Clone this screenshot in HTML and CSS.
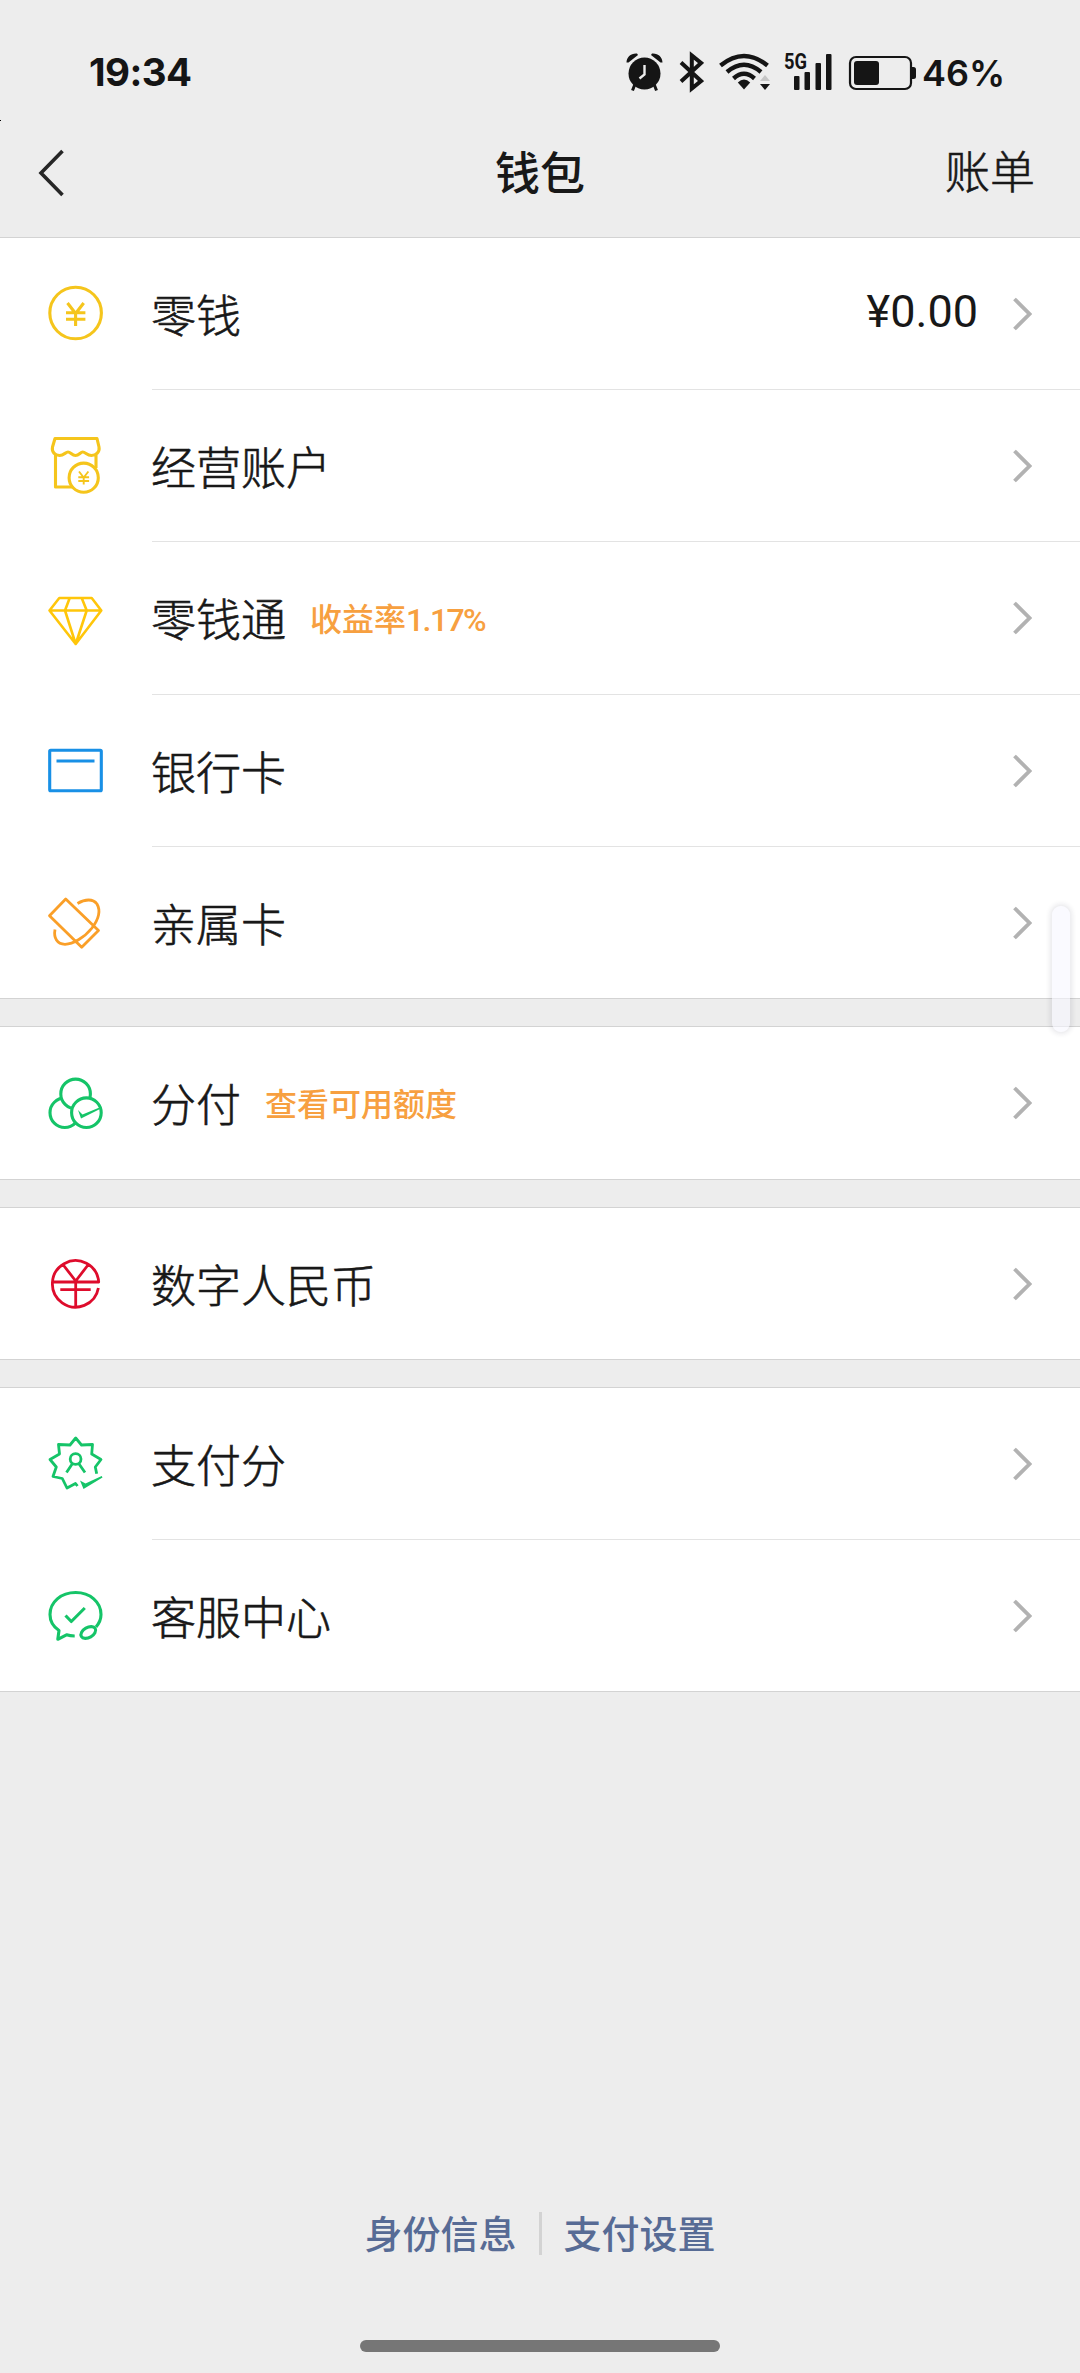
FILE: index.html
```html
<!DOCTYPE html>
<html lang="zh-CN">
<head>
<meta charset="utf-8">
<title>钱包</title>
<link rel="stylesheet" href="styles.css">
</head>
<body>
<svg class="defs" width="0" height="0"><defs>
  <symbol id="chevron" viewBox="0 0 20 34"><path d="M2.5 2L17.5 17L2.5 32" fill="none" stroke="#b2b2b2" stroke-width="3.8"/></symbol>
</defs></svg>
<header class="top">
  <div class="status">
    <span class="clock">19:34</span>
    <div class="indicators">
      <svg class="alarm" width="38" height="44" viewBox="626 50 38 44" fill="#151515">
        <circle cx="644.5" cy="73.5" r="16"/>
        <path d="M626.5 62.5C626.5 57 631 53 637 53.5L638 55L628.5 62.5ZM662.500 62.500C662.500 57 658 53 652 53.500L651 55L660.500 62.500Z"/>
        <path d="M635 84L632.500 90.500M654 84L656.500 90.500" stroke="#151515" stroke-width="3"/>
        <path d="M644.500 65V74.500L639.500 78.500" fill="none" stroke="#ededed" stroke-width="2.400"/>
      </svg>
      <svg class="bt" width="25" height="44" viewBox="679 50 25 44"><path d="M681 62.500L701 81L691.800 88.500V55.500L701 63L681 81.500" fill="none" stroke="#151515" stroke-width="4"/></svg>
      <svg class="wifi" width="54" height="44" viewBox="718 50 54 44" fill="none" stroke="#151515" stroke-width="4.400">
        <path d="M720.500 65.500Q744 46.500 767.500 65.500M727 72Q744 57.500 761 72M733.500 78.500Q744 69 754.500 78.500"/>
        <path d="M744 89.500L737.800 82.500Q744 76.500 750.200 82.500Z" fill="#151515" stroke="none"/>
        <path d="M760 81L765 75L770 81Z" fill="#c6c6c6" stroke="none"/>
        <path d="M760 84L765 90L770 84Z" fill="#151515" stroke="none"/>
      </svg>
      <svg class="signal" width="50" height="44" viewBox="783 50 50 44" fill="#151515">
        <text x="784" y="69" class="net" textLength="23" lengthAdjust="spacingAndGlyphs">5G</text>
        <rect x="794" y="76" width="5.500" height="14" rx="1"/><rect x="804.500" y="72" width="5.500" height="18" rx="1"/><rect x="815.500" y="63" width="5.500" height="27" rx="1"/><rect x="826" y="54" width="5.500" height="36" rx="1"/>
      </svg>
      <svg class="battery" width="68" height="44" viewBox="848 50 68 44">
        <rect x="850" y="57" width="61" height="32" rx="6" fill="none" stroke="#151515" stroke-width="2.200"/>
        <rect x="854" y="61" width="25" height="24" rx="3" fill="#151515"/>
        <path d="M912 67H913.500Q916 67 916 69.500V76.500Q916 79 913.500 79H912Z" fill="#151515"/>
      </svg>
      <span class="level">46%</span>
    </div>
  </div>
  <nav class="bar">
    <svg class="back" width="28" height="50" viewBox="0 0 28 50"><path d="M24.500 3L3 25L24.500 47" fill="none" stroke="#262626" stroke-width="3.600"/></svg>
    <h1 class="title">钱包</h1>
    <span class="bill">账单</span>
  </nav>
</header>
<main>
  <section class="group">
    <div class="row">
      <svg class="icon yellow" viewBox="0 0 61 61"><circle cx="30.600" cy="30" r="25.800"/><path d="M22.500 20L30.600 30.500L38.700 20M21 29.700H40.400M21 36.300H40.400M30.600 30V43"/></svg>
      <div class="cell"><span class="label">零钱</span><span class="amount">¥0.00</span><svg class="chev"><use href="#chevron"/></svg></div>
    </div>
    <div class="row">
      <svg class="icon yellow" viewBox="0 0 61 61"><path d="M10 3.500H52L54 12C55 17 51 20.500 46.500 20.500C42 20.500 40.500 17 37.700 17C35.500 17 34 20.500 30.500 20.500C27 20.500 25.500 17 23 17C20.500 17 19 20.500 14.500 20.500C10 20.500 6.500 17 7.500 12ZM10.500 20V52H27M51 20V33"/><circle cx="38.700" cy="42.700" r="14.600" fill="#fff"/><path class="fine" d="M34 36.500L38.700 42.500L43.400 36.500M33.300 42.200H44.100M33.300 46H44.100M38.700 42V49.500"/></svg>
      <div class="cell"><span class="label">经营账户</span><svg class="chev"><use href="#chevron"/></svg></div>
    </div>
    <div class="row tall">
      <svg class="icon gold" viewBox="0 0 61 61"><path d="M14.300 11H46.700L56.300 23.500L30.700 57L4.500 23.500ZM4.500 23.500H56.300M24.700 11L20 23.500L30.700 57L41.700 23.500L36.700 11"/></svg>
      <div class="cell"><span class="label">零钱通</span><span class="note">收益率<span class="rate">1.17%</span></span><svg class="chev"><use href="#chevron"/></svg></div>
    </div>
    <div class="row">
      <svg class="icon blue" viewBox="0 0 61 61"><rect x="4.700" y="10.300" width="51.600" height="40.400" rx="1"/><path d="M11.500 21H49.500"/></svg>
      <div class="cell"><span class="label">银行卡</span><svg class="chev"><use href="#chevron"/></svg></div>
    </div>
    <div class="row">
      <svg class="icon orange" viewBox="0 0 61 61"><path d="M20.700 7L4.500 23.700L36.700 55.300L53.500 38.500ZM32.500 11.500C40 7 48 6.500 52 12C56 19 53 28 47 36C39 46 28 52 20 52.300C12 52.300 8.500 46 10 37.500"/></svg>
      <div class="cell"><span class="label">亲属卡</span><svg class="chev"><use href="#chevron"/></svg></div>
    </div>
  </section>
  <section class="group">
    <div class="row tall">
      <svg class="icon green" viewBox="0 0 61 61"><circle cx="19.800" cy="40.700" r="14.800"/><circle cx="30.600" cy="21.900" r="14.800" fill="#fff"/><circle cx="41.400" cy="40.700" r="14.800" fill="#fff"/><path d="M33 38L36 46.500L55 37L54.500 35.500L37.500 42.500Z" class="solid"/></svg>
      <div class="cell"><span class="label">分付</span><span class="note">查看可用额度</span><svg class="chev"><use href="#chevron"/></svg></div>
    </div>
  </section>
  <section class="group">
    <div class="row">
      <svg class="icon red" viewBox="0 0 61 61"><path d="M53.400 35A23.200 23.200 0 1 1 53.700 29H7.500M18.300 12L30.700 28L43 12M15.300 36.700H45.700M30.700 28V53"/></svg>
      <div class="cell"><span class="label">数字人民币</span><svg class="chev"><use href="#chevron"/></svg></div>
    </div>
  </section>
  <section class="group">
    <div class="row">
      <svg class="icon green badge" viewBox="0 0 61 61"><path d="M51.700 40.700L50.300 34L56 26.500L46.700 21L47.500 11.500L36.500 12L30.700 5L25 12L13.500 11.500L14.500 21L5 26.500L11.300 34L8 43.500L17.300 45.500L22 55L30.500 50.500L32.500 53"/><circle cx="30.600" cy="26" r="5.400"/><path d="M27.500 30.500L21.500 39.500M33.700 30.500L40 39.500"/><path d="M35 47.500L38.500 56L57.500 44.500L56.700 43L40.500 50.500Z" class="solid"/></svg>
      <div class="cell"><span class="label">支付分</span><svg class="chev"><use href="#chevron"/></svg></div>
    </div>
    <div class="row">
      <svg class="icon green" viewBox="0 0 61 61"><path d="M51 42C54.500 38 56 34 56 29.500C56 17 45 7.500 30.700 7.500C16 7.500 5 17 5 29.500C5 36 8 41.500 14 45.500L12.800 54.300L21.500 49.800Q25 51 29.700 51"/><ellipse cx="43.300" cy="47.500" rx="8" ry="5" transform="rotate(-30 43.300 47.500)"/><path d="M20.500 30.500L26.300 36.500L39.800 23"/></svg>
      <div class="cell"><span class="label">客服中心</span><svg class="chev"><use href="#chevron"/></svg></div>
    </div>
  </section>
</main>
<footer class="foot">
  <div class="links"><span>身份信息</span><i class="sep"></i><span>支付设置</span></div>
  <div class="home"></div>
</footer>
<div class="handle"></div>
</body>
</html>
```
FILE: styles.css
```css
* { box-sizing: border-box; }
body {
  margin: 0;
  width: 1080px;
  height: 2373px;
  display: flex;
  flex-direction: column;
  position: relative;
  overflow: hidden;
  background: #ededed;
  color: #181818;
  font-family: Roboto, "Noto Sans CJK SC", sans-serif;
}
body::before { content: ""; position: absolute; left: 0; top: 120px; width: 1px; height: 1px; background: #000; }
svg { display: block; flex: none; }
.defs { position: absolute; }
.top { height: 237px; display: flex; flex-direction: column; }
.status { height: 110px; padding: 50px 78px 0 89px; display: flex; justify-content: space-between; }
.clock, .level { font-family: Inter, sans-serif; font-weight: 600; line-height: 44px; color: #151515; white-space: nowrap; }
.clock { font-size: 38.5px; font-weight: 700; letter-spacing: -0.6px; }
.indicators { display: flex; }
.bt { margin-left: 15px; }
.wifi { margin-left: 14px; }
.signal { margin-left: 11px; }
.battery { margin-left: 15px; }
.level { font-size: 36px; margin-left: 6px; width: 80px; line-height: 46px; }
.net { font: 700 22px Roboto, sans-serif; }
.bar { height: 127px; padding: 0 45px; display: grid; grid-template-columns: 1fr auto 1fr; align-items: center; }
.back { margin: 0 0 2px -7px; }
.title { margin: 0; padding-top: 3px; font-size: 45px; font-weight: 500; line-height: 64px; }
.bill, .label { font-size: 45px; font-weight: 300; line-height: 64px; -webkit-text-stroke: 0.6px currentColor; }
.bill { justify-self: end; }
.group { background: #fff; border-top: 1px solid #d3d3d3; border-bottom: 1px solid #d3d3d3; margin-bottom: 27px; }
.row { height: 152px; display: flex; }
.row.tall { height: 153px; }
.row:last-child { height: 151px; }
.row.tall:last-child { height: 152px; }
.icon { width: 61px; height: 61px; margin: 45px 46px 0 45px; fill: none; stroke: currentColor; stroke-width: 3.1; stroke-linejoin: round; }
.fine { stroke-width: 1.9; }
.solid { fill: currentColor; stroke: none; }
.badge { stroke-width: 2.8; }
.yellow { color: #f5c51c; }
.gold { color: #ffc60a; stroke-width: 2.6; }
.blue { color: #1890e6; }
.orange { color: #fa9f28; stroke-width: 2.8; }
.green { color: #15c468; }
.red { color: #de0c2c; stroke-width: 2.8; }
.cell { flex: 1; display: flex; align-items: center; padding-right: 48px; border-bottom: 1px solid #e3e3e3; }
.row:last-child .cell { border-bottom: 0; }
.label { padding-top: 8px; margin-left: -1px; }
.note { margin-left: 24px; font-size: 32px; font-weight: 500; line-height: 46px; color: #f7a040; padding-top: 4px; }
.rate { letter-spacing: -1.6px; }
.amount { margin-left: auto; font-size: 45px; line-height: 60px; margin-right: 34px; padding-bottom: 3px; }
.chev { width: 20px; height: 34px; margin-left: auto; }
.amount + .chev { margin-left: 0; }
.foot { margin-top: auto; display: flex; flex-direction: column; align-items: center; padding-bottom: 21px; }
.links { display: flex; align-items: center; gap: 22px; font-size: 38px; font-weight: 500; line-height: 56px; color: #576b95; }
.links span { padding-top: 3px; }
.sep { width: 3px; height: 43px; background: #d3d3d3; }
.home { width: 360px; height: 12px; margin-top: 77px; border-radius: 6px; background: #767676; }
.handle { position: absolute; left: 1052px; top: 906px; width: 18px; height: 126px; border-radius: 9px; background: rgba(247, 247, 255, .6); box-shadow: 0 0 5px 2px rgba(30, 30, 60, .1); }
```
